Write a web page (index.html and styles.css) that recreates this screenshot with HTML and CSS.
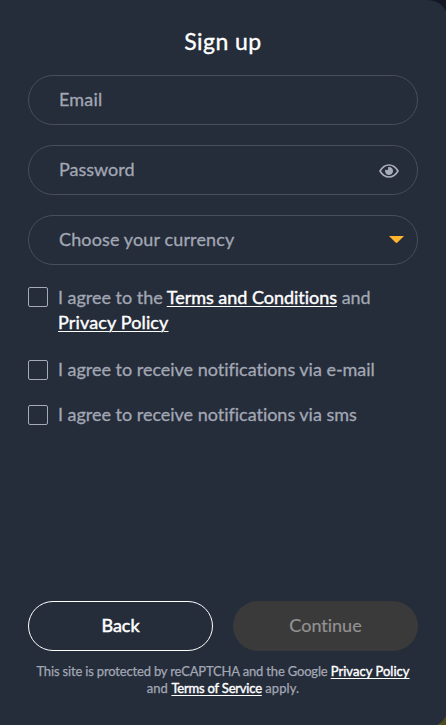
FILE: index.html
```html
<!DOCTYPE html>
<html lang="en">
<head>
<meta charset="utf-8">
<title>Sign up</title>
<link rel="stylesheet" href="styles.css">
</head>
<body>
<main class="page">
  <form class="panel">
    <h1 class="title">Sign up</h1>
    <div class="fields">
      <div class="field"><span class="field-email">Email</span></div>
      <div class="field"><span class="field-password">Password</span>
        <svg class="eye" viewBox="0 0 20 14" width="20" height="14"><path d="M1 7Q4.500 1 10 1Q15.500 1 19 7Q15.500 13 10 13Q4.500 13 1 7Z" fill="none" stroke="#a9adb8" stroke-width="1.700" stroke-linejoin="round"/><path d="M10 3A4 4 0 1 1 6.300 5.600L8.200 6.200Q9.800 5.600 9 3.300Z" fill="#a9adb8"/></svg>
      </div>
      <div class="field"><span class="field-currency">Choose your currency</span>
        <svg class="caret" viewBox="0 0 15 7" width="15" height="7"><path d="M0 0H15L8.500 6.500Q7.500 7.400 6.500 6.500Z" fill="#feb42f"/></svg>
      </div>
    </div>
    <div class="checks">
      <label class="check"><span class="box"></span><span class="terms">I agree to the <a class="terms-link">Terms and Conditions</a> and<br><a class="policy-link">Privacy Policy</a></span></label>
      <label class="check"><span class="box"></span><span class="mail">I agree to receive notifications via e-mail</span></label>
      <label class="check"><span class="box"></span><span class="sms">I agree to receive notifications via sms</span></label>
    </div>
    <div class="actions">
      <button type="button" class="button back">Back</button>
      <button type="button" class="button continue" disabled>Continue</button>
    </div>
    <p class="legal"><span class="legal-first">This site is protected by reCAPTCHA and the Google <a class="legal-policy">Privacy Policy</a></span><br><span class="legal-second">and <a class="legal-terms">Terms of Service</a> apply.</span></p>
  </form>
</main>
</body>
</html>
```
FILE: styles.css
```css
* { box-sizing: border-box; }
body { margin: 0; font-family: Lato, sans-serif; font-size: 18px; font-variant-ligatures: none; color: #a2a7b4; background: linear-gradient(#131824 50%, #4c4b20 50%); }
.page { width: 446px; height: 725px; overflow: hidden; }
.panel { width: 448px; height: 727px; padding: 24px 30px 0 28px; border-radius: 0 20px 20px 0; background: #252c3a; display: flex; flex-direction: column; }
.title { margin: 0; height: 34px; line-height: 34px; font-size: 23px; font-weight: 400; color: #fff; text-align: center; letter-spacing: .45px; -webkit-text-stroke: .35px currentColor; }
.fields { display: flex; flex-direction: column; gap: 20px; margin-top: 17px; }
.field { height: 50px; padding: 0 13px 2px 30px; border: 1px solid #484e5b; border-radius: 25px; display: flex; align-items: center; justify-content: space-between; -webkit-text-stroke: .3px currentColor; }
.field-email { letter-spacing: .2px; }
.field-currency { letter-spacing: .13px; }
.eye { margin: 3px 5px 0 0; }
.checks { display: flex; flex-direction: column; gap: 20px; margin-top: 20px; line-height: 25px; -webkit-text-stroke: .3px currentColor; }
.check { display: flex; gap: 10px; white-space: nowrap; }
.check:first-child { margin-bottom: 2px; }
.box { width: 20px; height: 20px; flex: none; margin-top: 2px; border: 1px solid #a5aab4; border-radius: 2px; }
.check + .check .box { margin-top: 3px; }
.terms, .mail, .sms { letter-spacing: -.02px; }
.policy-link { letter-spacing: .14px; }
a { color: #fff; text-decoration: underline; text-decoration-thickness: 1px; text-underline-offset: 2px; text-decoration-skip-ink: auto; -webkit-text-stroke: .4px currentColor; }
.actions { display: flex; gap: 20px; margin-top: auto; }
.button { width: 185px; height: 50px; padding: 0 0 2px; border-radius: 25px; font: inherit; font-variant-ligatures: none; }
.back { border: 1px solid #fff; background: none; color: #fff; -webkit-text-stroke: .5px currentColor; }
.continue { border: 0; background: #3a3a3a; color: #929292; -webkit-text-stroke: .2px currentColor; }
.legal { height: 76px; margin: 0; padding-top: 12px; font-size: 13px; line-height: 17px; text-align: center; white-space: nowrap; -webkit-text-stroke: .25px currentColor; }
.legal-first { letter-spacing: -.17px; }
.legal-policy { letter-spacing: .03px; }
.legal-second { letter-spacing: .1px; }
.legal-terms { letter-spacing: -.2px; }
```
